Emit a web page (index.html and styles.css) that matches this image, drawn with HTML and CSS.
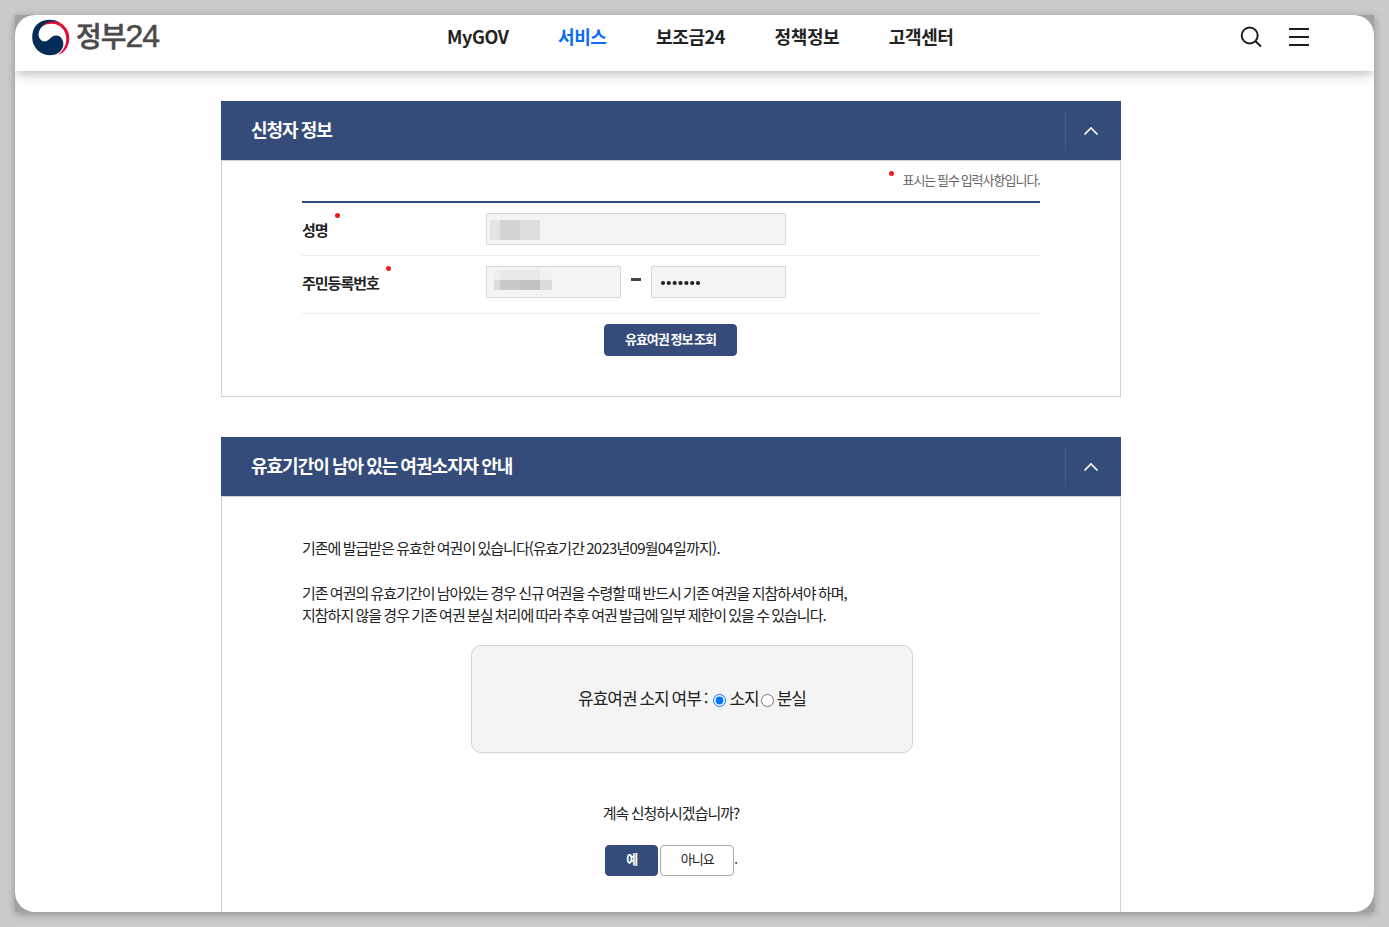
FILE: index.html
```html
<!DOCTYPE html>
<html lang="ko">
<head>
  <meta charset="UTF-8">
  <meta name="viewport" content="width=device-width, initial-scale=1.0">
  <title>정부24</title>
  <link rel="stylesheet" href="styles.css">
</head>
<body>

<div class="frame">
<div class="page">
  <header class="header">
    <a class="logo">
      <svg width="38" height="38" viewBox="0 0 38 38">
        <path fill="#e60a32" d="M6 9.500C10 2.500 19 0 26 2.800C33 5.800 37.500 12 37.300 19.500C37 28 32 34 26 36C31.500 31.500 34.300 26 34.300 20C34.300 11 28 5 20 4.700C13 4.500 8 8 6.500 13Z"/>
        <path fill="#052b57" d="M28 3.200C17 -2 5 1 1.200 11.500C-2.300 22.500 3.500 32.500 13 35.500C21 37.800 29 34.500 31 27.500C32.500 21 28.500 16.500 24 16.500C18.500 16.500 17.500 22.500 12.500 22.500C8.500 22.500 6 18 6.700 14C8 6.500 15 2.200 22.500 2.500C24.500 2.600 26 2.800 28 3.200Z"/>
      </svg>
      <span class="logo-text">정부<span class="logo-num">24</span></span>
    </a>
    <nav class="nav">
      <a>MyGOV</a>
      <a class="active">서비스</a>
      <a>보조금24</a>
      <a>정책정보</a>
      <a>고객센터</a>
    </nav>
    <div class="tools">
      <svg width="22" height="22" viewBox="0 0 22 22" fill="none" stroke="#1d1d1d" stroke-width="2">
        <circle cx="9.700" cy="9.500" r="8"/>
        <path d="M15.300 15L21 20.500"/>
      </svg>
      <svg width="20" height="18" viewBox="0 0 20 18" stroke="#1d1d1d" stroke-width="2">
        <path d="M0 1H20M0 9H20M0 17H20"/>
      </svg>
    </div>
  </header>

  <main class="content">
    <section class="panel">
      <div class="panel-head">
        <h2>신청자 정보</h2>
        <span class="toggle">
          <svg width="16" height="10" viewBox="0 0 16 10" fill="none" stroke="#fff" stroke-width="1.600"><path d="M1.500 8.500L8 2L14.500 8.500"/></svg>
        </span>
      </div>
      <div class="panel-body">
        <p class="required-note"><i class="dot"></i>표시는 필수 입력사항입니다.</p>
        <div class="form">
          <div class="row row-name">
            <span class="label">성명<i class="dot"></i></span>
            <div class="field wide">
              <svg width="54" height="30" shape-rendering="crispEdges">
                <rect x="3" y="6" width="10" height="20" fill="#e4e4e3"/>
                <rect x="13" y="6" width="20" height="20" fill="#d3d3d3"/>
                <rect x="33" y="6" width="20" height="20" fill="#dedede"/>
              </svg>
            </div>
          </div>
          <div class="row row-id">
            <span class="label">주민등록번호<i class="dot"></i></span>
            <div class="field">
              <svg width="66" height="30" shape-rendering="crispEdges">
                <rect x="7" y="3" width="6" height="10" fill="#eeeeee"/>
                <rect x="13" y="3" width="40" height="10" fill="#e9e9e9"/>
                <rect x="53" y="3" width="12" height="10" fill="#f1f1f1"/>
                <rect x="7" y="13" width="6" height="10" fill="#dcdcdc"/>
                <rect x="13" y="13" width="20" height="10" fill="#c9c9c9"/>
                <rect x="33" y="13" width="20" height="10" fill="#c1c1c1"/>
                <rect x="53" y="13" width="12" height="10" fill="#d8dcde"/>
              </svg>
            </div>
            <span class="dash"></span>
            <div class="field">
              <svg width="60" height="30" fill="#222">
                <circle cx="11" cy="16" r="2.100"/>
                <circle cx="16.800" cy="16" r="2.100"/>
                <circle cx="22.700" cy="16" r="2.100"/>
                <circle cx="28.500" cy="16" r="2.100"/>
                <circle cx="34.400" cy="16" r="2.100"/>
                <circle cx="40.200" cy="16" r="2.100"/>
                <circle cx="46" cy="16" r="2.100"/>
              </svg>
            </div>
          </div>
        </div>
        <button class="btn btn-lookup">유효여권 정보 조회</button>
      </div>
    </section>

    <section class="panel panel-guide">
      <div class="panel-head">
        <h2>유효기간이 남아 있는 여권소지자 안내</h2>
        <span class="toggle">
          <svg width="16" height="10" viewBox="0 0 16 10" fill="none" stroke="#fff" stroke-width="1.600"><path d="M1.500 8.500L8 2L14.500 8.500"/></svg>
        </span>
      </div>
      <div class="panel-body guide">
        <p>기존에 발급받은 유효한 여권이 있습니다(유효기간 <span class="date">2023년09월04일까지).</span></p>
        <p class="guide-text">기존 여권의 유효기간이 남아있는 경우 신규 여권을 수령할 때 반드시 기존 여권을 지참하셔야 하며,<br>지참하지 않을 경우 기존 여권 분실 처리에 따라 추후 여권 발급에 일부 제한이 있을 수 있습니다.</p>
        <div class="choice">
          <span>유효여권 소지 여부 :</span>
          <label><input type="radio" name="own" checked>소지</label>
          <label><input type="radio" name="own">분실</label>
        </div>
        <p class="ask">계속 신청하시겠습니까?</p>
        <div class="buttons">
          <button class="btn btn-yes">예</button>
          <button class="btn btn-no">아니요</button>
          <span class="period">.</span>
        </div>
      </div>
    </section>
  </main>
</div>
</div>

</body>
</html>
```
FILE: styles.css
```css
* {
  box-sizing: border-box;
}

body {
  margin: 0;
  height: 927px;
  padding: 15px;
  overflow: hidden;
  background: #cbcbcb;
  font-family: "Noto Sans CJK KR", sans-serif;
  font-size: 15px;
  letter-spacing: -1px;
  word-spacing: -0.93px;
  color: #222;
}

p, h2 {
  margin: 0;
}

.frame {
  height: 897px;
  background: #a1a1a1;
  box-shadow: 0 2px 8px rgba(0, 0, 0, 0.3);
}

.page {
  height: 897px;
  overflow: hidden;
  background: #fff;
  border-radius: 20px;
}

.header {
  display: flex;
  align-items: flex-start;
  height: 56px;
  box-shadow: 0 2px 12px rgba(0, 0, 0, 0.3);
}

.logo {
  display: flex;
  width: 432px;
  padding: 4px 0 0 17px;
}

.logo-text {
  margin-left: 6px;
  font-size: 28px;
  font-weight: 500;
  line-height: 33px;
  color: #4a4a4a;
  -webkit-text-stroke: 0.5px #4a4a4a;
}

.logo-num {
  font-family: "Liberation Sans", sans-serif;
  font-size: 32px;
  letter-spacing: -1px;
}

.nav {
  display: flex;
  gap: 49.6px;
  font-size: 18px;
  font-weight: bold;
  line-height: 26px;
  letter-spacing: -0.4px;
  padding-top: 8px;
}

.active {
  color: #0a6cf5;
}

.tools {
  display: flex;
  align-items: center;
  gap: 27px;
  margin: 11px 65px 0 auto;
}

.content {
  width: 900px;
  margin: 30px 0 0 206px;
}

.panel-head {
  display: flex;
  align-items: center;
  justify-content: space-between;
  height: 59px;
  padding-left: 30px;
  background: #354b79;
  color: #fff;
}

.panel-head h2 {
  padding-bottom: 3px;
  font-size: 18px;
  line-height: 26px;
}

.toggle {
  display: flex;
  align-items: center;
  justify-content: center;
  width: 56px;
  height: 40px;
  padding-right: 5px;
  border-left: 1px solid #465c88;
}

.panel-body {
  display: flex;
  flex-direction: column;
  height: 237px;
  padding: 0 80px;
  border: 1px solid #d0d0d0;
}

.dot {
  width: 5px;
  height: 5px;
  border-radius: 50%;
  background: #ee1c1c;
}

.required-note {
  display: flex;
  justify-content: flex-end;
  height: 40px;
  padding-top: 9px;
  font-size: 13px;
  line-height: 20px;
  color: #666;
}

.required-note .dot {
  margin: 1px 8px 0 0;
}

.form {
  border-top: 2px solid #354b79;
}

.row {
  display: flex;
  padding-top: 10px;
  border-bottom: 1px solid #ececec;
}

.row-name {
  height: 53px;
}

.row-id {
  height: 58px;
}

.label {
  display: flex;
  width: 184px;
  font-weight: bold;
  line-height: 33px;
}

.label .dot {
  margin-left: 7px;
}

.field {
  width: 135px;
  height: 32px;
  border: 1px solid #d8d8d8;
  border-radius: 1px;
  background: #f4f4f4;
}

.field svg {
  display: block;
}

.wide {
  width: 300px;
}

.dash {
  width: 10px;
  height: 3px;
  margin: 12px 10px 0;
  background: #444;
}

.btn {
  padding: 0 0 4px;
  border: 1px solid #354b79;
  border-radius: 4px;
  background: #354b79;
  color: #fff;
  font-family: inherit;
  font-size: 13px;
  font-weight: bold;
  letter-spacing: -1px;
  word-spacing: -0.93px;
}

.btn-lookup {
  width: 133px;
  height: 32px;
  margin: 10px 0 0 302px;
}

.panel-guide {
  margin-top: 40px;
}

.guide {
  height: 500px;
  padding-top: 40px;
  line-height: 22px;
}

.date {
  letter-spacing: -0.75px;
}

.guide-text {
  margin-top: 23px;
}

.choice {
  display: flex;
  align-items: center;
  justify-content: center;
  width: 442px;
  height: 108px;
  margin: 19px 0 0 169px;
  padding-bottom: 2px;
  border: 1px solid #d3d3d3;
  border-radius: 10px;
  background: #f4f4f4;
  font-size: 17px;
}

.choice label {
  display: flex;
  align-items: center;
}

.choice input {
  width: 13px;
  height: 13px;
  margin: 5px 3px 0 2px;
}

.choice span {
  margin-right: 4px;
}

.ask {
  margin-top: 49px;
  text-align: center;
}

.buttons {
  display: flex;
  justify-content: center;
  margin-top: 21px;
}

.btn-yes {
  width: 53px;
  height: 31px;
}

.btn-no {
  width: 74px;
  height: 31px;
  margin-left: 2px;
  border-color: #aaa;
  background: #fff;
  color: #222;
  font-weight: normal;
}

.period {
  padding-top: 3px;
  font-size: 13px;
}
```
